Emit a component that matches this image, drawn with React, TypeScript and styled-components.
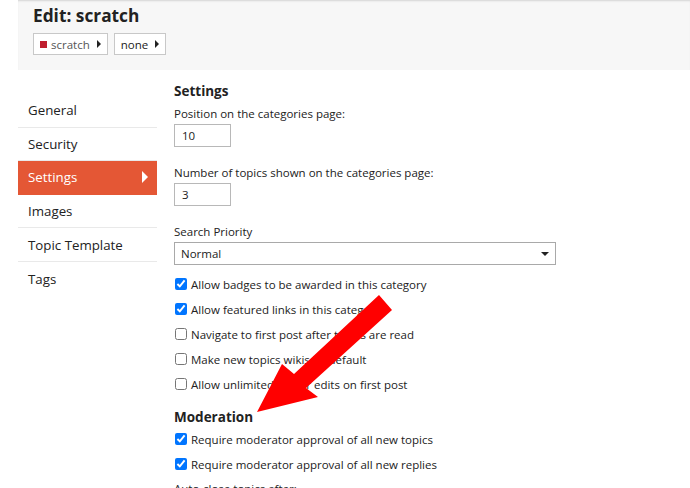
import styled, { createGlobalStyle } from "styled-components";

const GlobalStyle = createGlobalStyle`
  html, body {
    margin: 0;
    padding: 0;
    background: #fff;
  }
  body {
    width: 690px;
    height: 488px;
    overflow: hidden;
    font-family: "Open Sans", "Noto Sans", sans-serif;
    color: #222;
  }
`;

const sidebarItems = ["General", "Security", "Settings", "Images", "Topic Template", "Tags"];

const checks = [
  { label: "Allow badges to be awarded in this category", on: true },
  { label: "Allow featured links in this category", on: true },
  { label: "Navigate to first post after topics are read", on: false },
  { label: "Make new topics wikis by default", on: false },
  { label: "Allow unlimited owner edits on first post", on: false },
];

const moderation = [
  "Require moderator approval of all new topics",
  "Require moderator approval of all new replies",
];

const App = () => {
  return (
    <Page>
      <GlobalStyle />
      <Header>
        <Title>Edit: scratch</Title>
        <Crumbs>
          <Crumb>
            <Swatch />
            <CrumbText $muted>scratch</CrumbText>
            <Caret />
          </Crumb>
          <Crumb>
            <CrumbText>none</CrumbText>
            <Caret />
          </Crumb>
        </Crumbs>
      </Header>
      <Body>
        <Sidebar>
          {sidebarItems.map((item) => (
            <NavItem key={item} $active={item === "Settings"}>
              {item}
              {item === "Settings" && <NavArrow />}
            </NavItem>
          ))}
        </Sidebar>
        <Main>
          <Heading>Settings</Heading>
          <Label>Position on the categories page:</Label>
          <SmallInput>10</SmallInput>
          <Label $gap={18}>Number of topics shown on the categories page:</Label>
          <SmallInput>3</SmallInput>
          <Label $gap={18}>Search Priority</Label>
          <Select>
            Normal
            <SelectCaret />
          </Select>
          <CheckList>
            {checks.map((c) => (
              <CheckRow key={c.label}>
                <Box type="checkbox" checked={c.on} readOnly />
                {c.label}
              </CheckRow>
            ))}
          </CheckList>
          <Heading $spaced>Moderation</Heading>
          <CheckList $tight>
            {moderation.map((m) => (
              <CheckRow key={m}>
                <Box type="checkbox" checked readOnly />
                {m}
              </CheckRow>
            ))}
          </CheckList>
          <Label $gap={9}>Auto-close topics after:</Label>
        </Main>
      </Body>
      <Arrow viewBox="0 0 690 488" width="690" height="488">
        <polygon
          points="379,295 392,310 306,388 318,397 257,412 282,364 294,374"
          fill="#ff0000"
        />
      </Arrow>
    </Page>
  );
};

const Page = styled.div`
  position: relative;
  width: 690px;
  height: 488px;
  overflow: hidden;
`;

const Header = styled.header`
  margin-left: 18px;
  height: 70px;
  box-sizing: border-box;
  padding: 5px 15px 0;
  background: #f7f7f7;
  box-shadow: inset 0 2px 2px -1px #d4d4d4;
`;

const Title = styled.h1`
  margin: 0;
  font-size: 17.3px;
  font-weight: 700;
  line-height: 22px;
  color: #222;
`;

const Crumbs = styled.div`
  display: flex;
  gap: 6px;
  margin-top: 6px;
`;

const Crumb = styled.div`
  display: flex;
  align-items: center;
  height: 22px;
  box-sizing: border-box;
  padding: 0 6px 0 6px;
  border: 1px solid #c8c8c8;
  background: #fff;
  font-size: 11.5px;
`;

const Swatch = styled.span`
  width: 7px;
  height: 7px;
  background: #bf1e2e;
  margin-right: 4px;
`;

const CrumbText = styled.span<{ $muted?: boolean }>`
  color: ${(p) => (p.$muted ? "#555" : "#222")};
`;

const Caret = styled.span`
  margin-left: 7px;
  width: 0;
  height: 0;
  border-top: 4px solid transparent;
  border-bottom: 4px solid transparent;
  border-left: 4px solid #222;
`;

const Body = styled.div`
  display: flex;
  padding-left: 18px;
  gap: 17px;
`;

const Sidebar = styled.nav`
  width: 139px;
  margin-top: 24px;
  flex-shrink: 0;
`;

const NavItem = styled.div<{ $active?: boolean }>`
  position: relative;
  height: 33.6px;
  box-sizing: border-box;
  padding-left: 10px;
  display: flex;
  align-items: center;
  font-size: 13.3px;
  color: ${(p) => (p.$active ? "#fff" : "#222")};
  background: ${(p) => (p.$active ? "#e45735" : "transparent")};
  border-bottom: 1px solid ${(p) => (p.$active ? "#e45735" : "#e9e9e9")};

  &:last-child {
    border-bottom: none;
  }
`;

const NavArrow = styled.span`
  position: absolute;
  right: 9px;
  top: 50%;
  margin-top: -6px;
  width: 0;
  height: 0;
  border-top: 6px solid transparent;
  border-bottom: 6px solid transparent;
  border-left: 6px solid #fff;
`;

const Main = styled.main`
  flex: 1;
  padding-top: 12px;
`;

const Heading = styled.h3<{ $spaced?: boolean }>`
  margin: ${(p) => (p.$spaced ? "16px 0 5px" : "0 0 6px")};
  font-size: 13.5px;
  font-weight: 700;
  line-height: 18px;
  color: #222;
`;

const Label = styled.div<{ $gap?: number }>`
  margin-top: ${(p) => p.$gap ?? 0}px;
  margin-bottom: 2px;
  font-size: 11.5px;
  line-height: 16px;
  color: #222;
`;

const SmallInput = styled.div`
  width: 57px;
  height: 23px;
  box-sizing: border-box;
  border: 1px solid #b8b8b8;
  padding: 0 7px;
  font-size: 11.5px;
  line-height: 21px;
  color: #222;
`;

const Select = styled.div`
  position: relative;
  width: 382px;
  height: 23px;
  box-sizing: border-box;
  border: 1px solid #a9a9a9;
  padding: 0 6px;
  font-size: 11.5px;
  line-height: 21px;
  color: #222;
`;

const SelectCaret = styled.span`
  position: absolute;
  right: 6px;
  top: 9px;
  width: 0;
  height: 0;
  border-left: 4px solid transparent;
  border-right: 4px solid transparent;
  border-top: 4px solid #222;
`;

const CheckList = styled.div<{ $tight?: boolean }>`
  display: flex;
  flex-direction: column;
  gap: 9px;
  margin-top: ${(p) => (p.$tight ? "0" : "11px")};
`;

const CheckRow = styled.label`
  display: flex;
  align-items: center;
  height: 16px;
  font-size: 11.5px;
  color: #222;
`;

const Box = styled.input`
  width: 12px;
  height: 12px;
  margin: 0 4px 0 1px;
  accent-color: #0075ff;
`;

const Arrow = styled.svg`
  position: absolute;
  left: 0;
  top: 0;
  pointer-events: none;
`;

export default App;
